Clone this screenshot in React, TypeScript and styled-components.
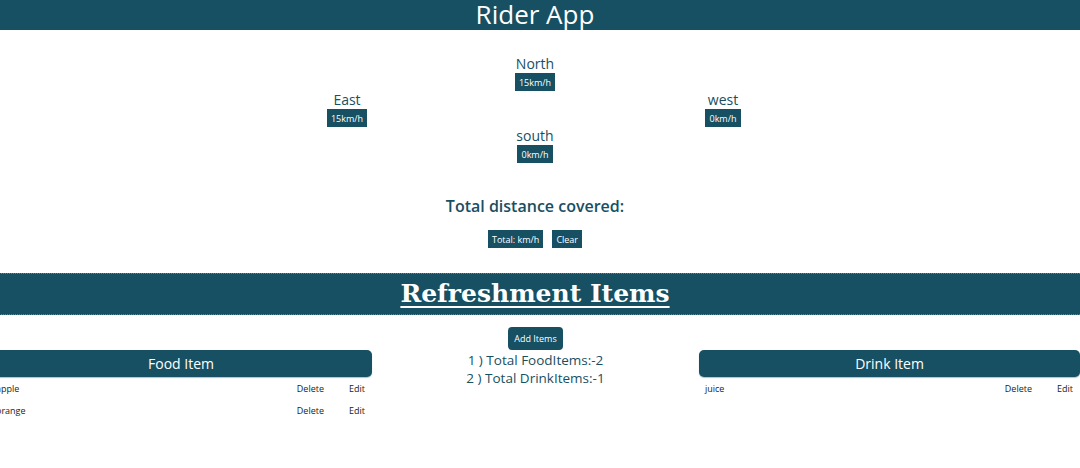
import React from 'react';
import styled, { createGlobalStyle } from 'styled-components';

const teal = '#174f63';

const GlobalStyle = createGlobalStyle`
  body {
    margin: 0;
    overflow: hidden;
    background: #fff;
    font-family: 'Open Sans', 'Noto Sans', sans-serif;
  }
`;

// page is a bit wider than the window and scrolled 10px, like the original
const Page = styled.div`
  width: 1090px;
  margin-left: -10px;
`;

const TopBar = styled.h1`
  margin: 0;
  height: 30px;
  background: ${teal};
  color: #fff;
  text-align: center;
  font-weight: 400;
  font-size: 26px;
  line-height: 29px;
`;

const Compass = styled.div`
  display: grid;
  grid-template-columns: repeat(3, 188px);
  justify-content: center;
  margin-top: 25px;
`;

const Direction = styled.div<{ $col: number; $row: number }>`
  grid-column: ${(p) => p.$col};
  grid-row: ${(p) => p.$row};
  display: flex;
  flex-direction: column;
  align-items: center;
`;

const DirLabel = styled.span`
  color: ${teal};
  font-size: 14px;
  font-weight: 500;
  line-height: 18px;
`;

const Tag = styled.button<{ $rounded?: boolean }>`
  border: none;
  background: ${teal};
  color: #fff;
  font-family: inherit;
  font-size: 9px;
  font-weight: 500;
  height: 18px;
  padding: 0 4px;
  border-radius: ${(p) => (p.$rounded ? '4px' : '0')};
  cursor: pointer;
`;

const TotalTitle = styled.h2`
  margin: 31px 0 0;
  text-align: center;
  color: ${teal};
  font-weight: 600;
  font-size: 16px;
  line-height: 24px;
`;

const TotalButtons = styled.div`
  display: flex;
  justify-content: center;
  gap: 9px;
  margin-top: 12px;
`;

const SectionBar = styled.h2`
  margin: 25px 0 0;
  height: 40px;
  background: ${teal};
  border-top: 1px dotted #5d8796;
  border-bottom: 1px dotted #5d8796;
  color: #fff;
  text-align: center;
  font-family: 'DejaVu Serif', 'Liberation Serif', serif;
  font-size: 25px;
  font-weight: 700;
  line-height: 40px;
  text-decoration: underline;
  text-decoration-thickness: 2px;
  text-underline-offset: 4px;
`;

const Columns = styled.div`
  display: grid;
  grid-template-columns: 382px 1fr 381px;
  align-items: start;
`;

const ListColumn = styled.div`
  margin-top: 35px;
`;

const ListHead = styled.div`
  height: 27px;
  border-radius: 5px;
  background: ${teal};
  color: #fff;
  text-align: center;
  font-size: 14px;
  line-height: 27px;
  box-shadow: 0 1px 1px rgba(23, 79, 99, 0.35);
`;

const ItemRow = styled.div`
  display: flex;
  align-items: center;
  height: 22px;
  padding: 0 7px 0 6px;
  font-size: 9px;
  color: #222;
`;

const ItemName = styled.span`
  flex: 1;
`;

const ItemAction = styled.span<{ $gap?: number }>`
  margin-right: ${(p) => p.$gap ?? 0}px;
  cursor: pointer;
`;

const Middle = styled.div`
  display: flex;
  flex-direction: column;
  align-items: center;
  padding-top: 12px;
`;

const AddButton = styled(Tag)`
  height: 23px;
  padding: 0 6px;
`;

const Counts = styled.div`
  color: ${teal};
  font-size: 13.5px;
  line-height: 18px;
  font-weight: 500;
  text-align: center;
  margin-top: 1px;
`;

type Item = { name: string };

const foods: Item[] = [{ name: 'apple' }, { name: 'orange' }];
const drinks: Item[] = [{ name: 'juice' }];

const ItemList: React.FC<{ title: string; items: Item[] }> = ({ title, items }) => (
  <ListColumn>
    <ListHead>{title}</ListHead>
    {items.map((it) => (
      <ItemRow key={it.name}>
        <ItemName>{it.name}</ItemName>
        <ItemAction $gap={25}>Delete</ItemAction>
        <ItemAction>Edit</ItemAction>
      </ItemRow>
    ))}
  </ListColumn>
);

const App: React.FC = () => {
  return (
    <Page>
      <GlobalStyle />
      <TopBar>Rider App</TopBar>

      <Compass>
        <Direction $col={2} $row={1}>
          <DirLabel>North</DirLabel>
          <Tag>15km/h</Tag>
        </Direction>
        <Direction $col={1} $row={2}>
          <DirLabel>East</DirLabel>
          <Tag>15km/h</Tag>
        </Direction>
        <Direction $col={3} $row={2}>
          <DirLabel>west</DirLabel>
          <Tag>0km/h</Tag>
        </Direction>
        <Direction $col={2} $row={3}>
          <DirLabel>south</DirLabel>
          <Tag>0km/h</Tag>
        </Direction>
      </Compass>

      <TotalTitle>Total distance covered:</TotalTitle>
      <TotalButtons>
        <Tag>Total: km/h</Tag>
        <Tag>Clear</Tag>
      </TotalButtons>

      <SectionBar>Refreshment Items</SectionBar>

      <Columns>
        <ItemList title="Food Item" items={foods} />
        <Middle>
          <AddButton $rounded>Add Items</AddButton>
          <Counts>
            1 ) Total FoodItems:-{foods.length}
            <br />
            2 ) Total DrinkItems:-{drinks.length}
          </Counts>
        </Middle>
        <ItemList title="Drink Item" items={drinks} />
      </Columns>
    </Page>
  );
};

export default App;
